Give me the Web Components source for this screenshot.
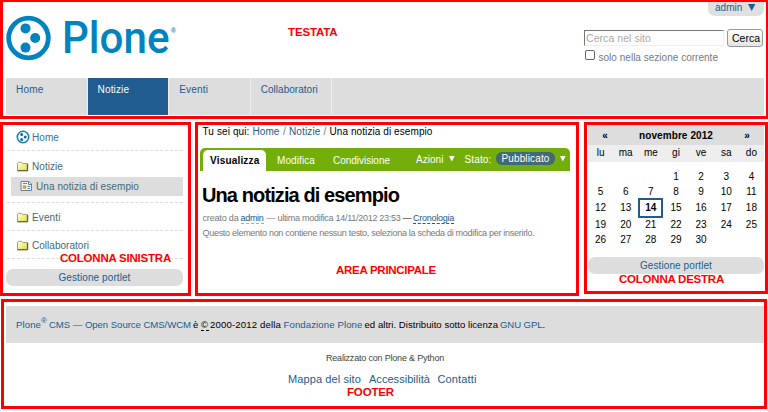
<!DOCTYPE html>
<html lang="it">
<head>
<meta charset="utf-8">
<title>Una notizia di esempio</title>
<style>
html,body{margin:0;background:#fff}
body{width:768px;height:412px;overflow:hidden;font:10px/14px "Liberation Sans",Arial,sans-serif;color:#000;--blue:#205c90;--grey:#ddd}
</style>
</head>
<body>
<plone-page></plone-page>
<script>
const define = (name, html, setup) => customElements.define(name, class extends HTMLElement {
  connectedCallback() {
    if (this.shadowRoot) return;
    const t = document.createElement('template');
    t.innerHTML = html;
    this.attachShadow({mode: 'open'}).append(t.content.cloneNode(true));
    if (setup) setup(this, this.shadowRoot);
  }
});

/* One run of text, spaced to fill the width w; g is the gap before it, s the font size. */
define('text-run', `<style>:host{display:inline-block;white-space:pre;flex:none}span{display:inline-block}</style><span><slot></slot></span>`, (el, root) => {
  const span = root.querySelector('span');
  const w = +el.getAttribute('w');
  if (el.hasAttribute('s')) el.style.fontSize = el.getAttribute('s') + 'px';
  if (el.hasAttribute('g')) el.style.marginLeft = el.getAttribute('g') + 'px';
  if (w) {
    const natural = span.getBoundingClientRect().width;
    span.style.letterSpacing = ((w - natural) / el.textContent.length).toFixed(3) + 'px';
    el.style.width = w + 'px';
  }
});

/* A page region framed in red. */
define('region-frame', `<style>
:host{display:block;box-sizing:border-box;position:relative;border:3px solid #f00}
.label{position:absolute;left:var(--lx);top:var(--ly);color:#f00;font-weight:bold;font-size:11.5px;line-height:14px}
</style><slot></slot><div class="label"><slot name="label"></slot></div>`, (el, root) => {
  const run = el.querySelector('[slot=label]');
  if (run && run.shadowRoot) {
    const span = run.shadowRoot.querySelector('span');
    span.style.letterSpacing = '0';
    const w = +run.getAttribute('w');
    span.style.letterSpacing = ((w - span.getBoundingClientRect().width) / run.textContent.length).toFixed(3) + 'px';
  }
});

define('plone-logo', `<style>:host{display:flex;height:48px;color:#0083be}svg{display:block;flex:none}
.n{width:108px;margin-left:6px;height:48px;font:500 44px/48px Roboto,sans-serif;white-space:nowrap}
.n span{display:inline-block;transform-origin:0 0}
.r{font:bold 6.5px/8px "Liberation Sans",sans-serif;margin:13px 0 0 1px}</style>
<svg width="50" height="48" fill="#0083be">
<circle cx="22.5" cy="24" r="19.8" fill="none" stroke="#0083be" stroke-width="4.8"/>
<circle cx="19.5" cy="14.4" r="5"/><circle cx="29.2" cy="24" r="5"/><circle cx="19.5" cy="33.6" r="5"/>
</svg><div class="n"><span>Plone</span></div><div class="r">®</div>`, (el, root) => {
  const s = root.querySelector('.n span');
  s.style.transform = `scaleX(${107.5 / s.getBoundingClientRect().width})`;
});

define('user-menu', `<style>:host{display:flex;box-sizing:border-box;width:56px;height:14px;padding:0 0 0 7px;background:#e0e0e0;border-radius:0 0 7px 7px;color:var(--blue);line-height:11px}
svg{margin:2px 0 0 5px}</style><text-run w="27.5">admin</text-run><svg width="8" height="7"><path d="M0 0H7.4L3.7 7Z" fill="#205c90"/></svg>`);

define('search-box', `<style>
:host{display:block;width:180px;color:#76797c}
.row{display:flex}
.in{box-sizing:border-box;width:140px;height:16px;border:1px solid #eee;border-top:1.5px solid #777;border-left:1.5px solid #777;margin-top:1px;padding-left:1px;color:#a9a9a9;line-height:15px}
.btn{box-sizing:border-box;width:36px;height:18px;border:1px solid #999;border-radius:3px;margin-left:3px;background:linear-gradient(#fff,#e4e4e4);color:#000;line-height:17px;padding-left:4px}
.cb{box-sizing:border-box;width:10px;height:10px;border:1px solid #666;border-radius:2px;margin:3px 0 0 1px;background:#fff}
.row2 text-run{margin-top:4px}
</style><div class="row"><div class="in"><text-run w="65" s="10.5">Cerca nel sito</text-run></div><div class="btn"><text-run w="28" s="10.5">Cerca</text-run></div></div>
<div class="row row2"><span class="cb"></span><text-run g="3.5" w="119.5">solo nella sezione corrente</text-run></div>`);

define('nav-tab', `<style>
:host{display:block;box-sizing:border-box;width:81.6px;height:37px;padding:5px 0 0 10px;color:var(--blue);border-right:1px solid #eee}
:host([selected]){background:var(--blue);color:#fff}
</style><slot></slot>`);

define('site-header', `<style>
:host{display:block;height:115px}
.top{display:flex;height:76px}
.logo{margin:12px 0 0 3px;width:179px;flex:none}
.right{margin-left:auto;padding-right:2px;display:flex;flex-direction:column;align-items:flex-end}
search-box{margin-top:13px}
nav{display:flex;margin:0 2px 0 3px;height:37px;background:var(--grey)}
</style>
<div class="top"><plone-logo class="logo"></plone-logo><div class="right"><user-menu></user-menu><search-box></search-box></div></div>
<nav><nav-tab><text-run w="27.5">Home</text-run></nav-tab><nav-tab selected><text-run w="31.5">Notizie</text-run></nav-tab><nav-tab><text-run w="29">Eventi</text-run></nav-tab><nav-tab><text-run w="57">Collaboratori</text-run></nav-tab></nav>`);

const ICONS = {
  home: `<svg width="14" height="14"><circle cx="7" cy="7" r="5.7" fill="#fff" stroke="#0f7fbd" stroke-width="1.6"/><g fill="#0f6ba8"><circle cx="5.7" cy="4.5" r="1.5"/><circle cx="9.2" cy="7" r="1.5"/><circle cx="5.7" cy="9.6" r="1.5"/></g></svg>`,
  folder: `<svg width="14" height="14"><defs><linearGradient id="f" x2="1" y2="1"><stop offset="0" stop-color="#fffff2"/><stop offset="1" stop-color="#e2df3c"/></linearGradient></defs><path d="M1.5 10.5V3.5L2.5 2.3H5.7L6.8 3.5H11.2V10.5Z" fill="url(#f)" stroke="#a5a25a"/><path d="M1.5 10.8H11.7V3.8" fill="none" stroke="#4e4d34"/></svg>`,
  news: `<svg width="14" height="14"><path d="M1 1.5H9L11.5 4V10.5H1Z" fill="#eef5fc" stroke="#65829c"/><path d="M8.5 1.5V4.5H11.5" fill="none" stroke="#65829c"/><path d="M3 3.5H7M7.5 6.5H10M7.5 8.5H10" stroke="#5c8ab8"/><path d="M2.8 5.3H6.2V8.8H2.8Z" fill="#e89c28"/></svg>`
};
define('tree-item', `<style>
:host{display:flex;box-sizing:border-box;color:#436976;height:var(--h,14px)}
.i{width:14px;height:14px;margin-right:2px;flex:none}svg{display:block}
</style><span class="i"></span><slot></slot>`, (el, root) => { root.querySelector('.i').innerHTML = ICONS[el.getAttribute('icon')]; });

define('manage-button', `<style>:host{display:flex;justify-content:center;height:17px;line-height:17px;border-radius:7px;background:var(--grey);color:var(--blue)}</style><slot></slot>`);

define('side-nav', `<style>
:host{display:block;padding:0 5px 0 4px}
.g{box-sizing:border-box;border-bottom:1px dashed #dcdcdc;padding-left:9px}
tree-item.sel{background:var(--grey);margin-left:-5px;padding:3px 0 0 9px;--h:19px;margin-top:2px}
manage-button{margin:10px 0 0 -1px}
</style>
<div class="g" style="height:26px;padding-top:5px"><tree-item icon="home" style="color:#35739c"><text-run w="27" style="margin-top:1px">Home</text-run></tree-item></div>
<div class="g" style="height:52px;padding-top:9px"><tree-item icon="folder" style="--h:15px"><text-run w="31">Notizie</text-run></tree-item><tree-item class="sel" icon="news"><text-run w="103">Una notizia di esempio</text-run></tree-item></div>
<div class="g" style="height:28px;padding-top:8px"><tree-item icon="folder"><text-run w="28.5">Eventi</text-run></tree-item></div>
<div class="g" style="height:28px;padding-top:8px"><tree-item icon="folder"><text-run w="57">Collaboratori</text-run></tree-item></div>
<manage-button><text-run w="72">Gestione portlet</text-run></manage-button>`);

define('content-views', `<style>
:host{display:flex;box-sizing:border-box;height:23px;width:370px;margin-left:2px;background:#74ae0b;border-radius:5px 5px 0 0;color:#fff;padding:2px 0 0 3px}
.on{box-sizing:border-box;background:#fff;color:#000;border-radius:5px 5px 0 0;width:63px;height:21px;padding:4px 0 0 7px;font-weight:bold}
.v{padding-top:4px;height:14px}.a{padding-top:3px;height:14px}
.pill{box-sizing:border-box;background:#436976;border-radius:6px;width:59px;height:13px;margin:2px 0 0 4px;padding-left:6px;line-height:14px}
svg{margin:6px 0 0 5px;flex:none}
</style>
<div class="on"><text-run w="49.5">Visualizza</text-run></div>
<text-run class="v" g="11" w="38">Modifica</text-run><text-run class="v" g="18" w="57">Condivisione</text-run>
<text-run class="a" g="26" w="27.5">Azioni</text-run><svg width="6" height="6"><path d="M0 0H5.6L2.8 5.6Z" fill="#fff"/></svg>
<text-run class="a" g="10" w="27">Stato:</text-run><div class="pill"><text-run w="48">Pubblicato</text-run></div><svg width="6" height="6"><path d="M0 0H5.6L2.8 5.6Z" fill="#fff"/></svg>`);

define('main-content', `<style>
:host{display:block}
.crumbs{display:flex;height:23px;padding-left:4.5px}
b,.b{color:var(--blue);font-weight:normal}.s{color:#76797c}
h1{margin:13px 0 0 4px;font-size:20px;line-height:22px;height:22px;font-weight:bold}
.meta,p{display:flex;margin:0;padding-left:4.5px;color:#76797c;font-size:9px}
.meta{margin-top:5px;height:15px}
.u{height:12px;border-bottom:1px dashed #8fb0cc;color:var(--blue)}
</style>
<div class="crumbs"><text-run w="47">Tu sei qui:</text-run><text-run class="b" g="3" w="27">Home</text-run><text-run class="s" g="3.5" w="3">/</text-run><text-run class="b" g="3" w="31.5">Notizie</text-run><text-run class="s" g="3" w="3">/</text-run><text-run g="3" w="103">Una notizia di esempio</text-run></div>
<content-views></content-views>
<h1><text-run w="197">Una notizia di esempio</text-run></h1>
<div class="meta"><text-run w="36">creato da</text-run><text-run class="u" g="2" w="23">admin</text-run><text-run g="3" w="134">— ultima modifica 14/11/2012 23:53</text-run><text-run g="2" w="9" style="color:#000">—</text-run><text-run class="u" g="1.5" w="41" style="border-color:#205c90">Cronologia</text-run></div>
<p><text-run w="332">Questo elemento non contiene nessun testo, seleziona la scheda di modifica per inserirlo.</text-run></p>`);

define('month-calendar', `<style>
:host{display:block}
.r{display:grid;grid-template-columns:repeat(7,1fr);text-align:center}
.h{background:var(--grey);height:20px;line-height:21px;font-weight:bold;display:grid;grid-template-columns:34px 1fr 34px;text-align:center}
.d{background:#eee;height:17px;line-height:16px}
.w span{box-sizing:border-box}
.t{border:2px solid var(--blue);margin:-1px 0 -1px;line-height:16px;font-weight:bold}
</style><div class="h"><span>«</span><span><text-run w="74">novembre 2012</text-run></span><span>»</span></div>`, (el, root) => {
  const row = (cls, cells, h) => {
    const r = document.createElement('div');
    r.className = 'r ' + cls;
    if (h) { r.style.height = h + 'px'; r.style.lineHeight = h + 'px'; }
    for (const c of cells) {
      const s = document.createElement('span');
      s.textContent = c;
      if (c === 14) s.className = 't';
      r.append(s);
    }
    root.append(r);
    return r;
  };
  row('d', ['lu','ma','me','gi','ve','sa','do']);
  [15, 15, 18, 15, 15].forEach((h, i) => {
    const r = row('w', Array.from({length: 7}, (_, j) => { const n = i * 7 + j - 2; return n > 0 && n <= 30 ? n : ''; }), h);
    if (!i) r.style.marginTop = '7px';
  });
});

define('site-footer', `<style>
:host{display:block;padding:4px 0 0 2px;color:#000}
.bar{display:flex;box-sizing:border-box;width:758px;height:37px;background:var(--grey);padding:12px 0 0 10px;font-size:9.6px}
.b{color:var(--blue)}
.c{display:flex;justify-content:center;width:758px}
.links{justify-content:flex-start;padding-left:282px;font-size:11px;margin-top:7px;color:var(--blue);box-sizing:border-box}
</style>
<div class="bar"><text-run class="b" w="25">Plone</text-run><text-run class="b" w="7" s="8" style="margin-top:-4px">®</text-run><text-run class="b" g="1" w="142">CMS — Open Source CMS/WCM</text-run><text-run g="2" w="6">è</text-run><text-run g="2" w="7.5" style="height:12px;border-bottom:1px dashed #000">©</text-run><text-run g="1.5" w="71">2000-2012 della</text-run><text-run class="b" g="2.5" w="79">Fondazione Plone</text-run><text-run g="2" w="133.5">ed altri. Distribuito sotto licenza</text-run><text-run class="b" g="2" w="42.5">GNU GPL</text-run><text-run w="3">.</text-run></div>
<div class="c" style="margin-top:8px;font-size:9px;color:#444"><text-run w="118">Realizzato con Plone &amp; Python</text-run></div>
<div class="c links"><text-run w="73">Mappa del sito</text-run><text-run g="8" w="61">Accessibilità</text-run><text-run g="7.5" w="39">Contatti</text-run></div>`);

define('plone-page', `<style>
:host{display:grid;grid-template-rows:119px 174px 110px;row-gap:3px;width:768px;height:412px}
.cols{display:grid;grid-template-columns:191px 384px 184px;column-gap:4px;align-items:start;height:174px}
.cols>:last-child{margin-left:1px;width:184px}
</style>
<region-frame style="border-width:2px 2px 3px 3px;--lx:285px;--ly:23px"><site-header></site-header><text-run slot="label" w="49.5">TESTATA</text-run></region-frame>
<div class="cols">
<region-frame style="height:174px;--lx:57px;--ly:126px"><side-nav></side-nav><text-run slot="label" w="111">COLONNA SINISTRA</text-run></region-frame>
<region-frame style="height:174px;--lx:138px;--ly:138px"><main-content></main-content><text-run slot="label" w="100">AREA PRINCIPALE</text-run></region-frame>
<region-frame style="height:172px;--lx:32px;--ly:147px"><month-calendar style="margin:0 1px"></month-calendar><manage-button style="margin:10px 1px 0"><text-run w="72">Gestione portlet</text-run></manage-button><text-run slot="label" w="105">COLONNA DESTRA</text-run></region-frame>
</div>
<region-frame style="margin:0 1px;--lx:343px;--ly:83px"><site-footer></site-footer><text-run slot="label" w="47">FOOTER</text-run></region-frame>`);
</script>
</body>
</html>
